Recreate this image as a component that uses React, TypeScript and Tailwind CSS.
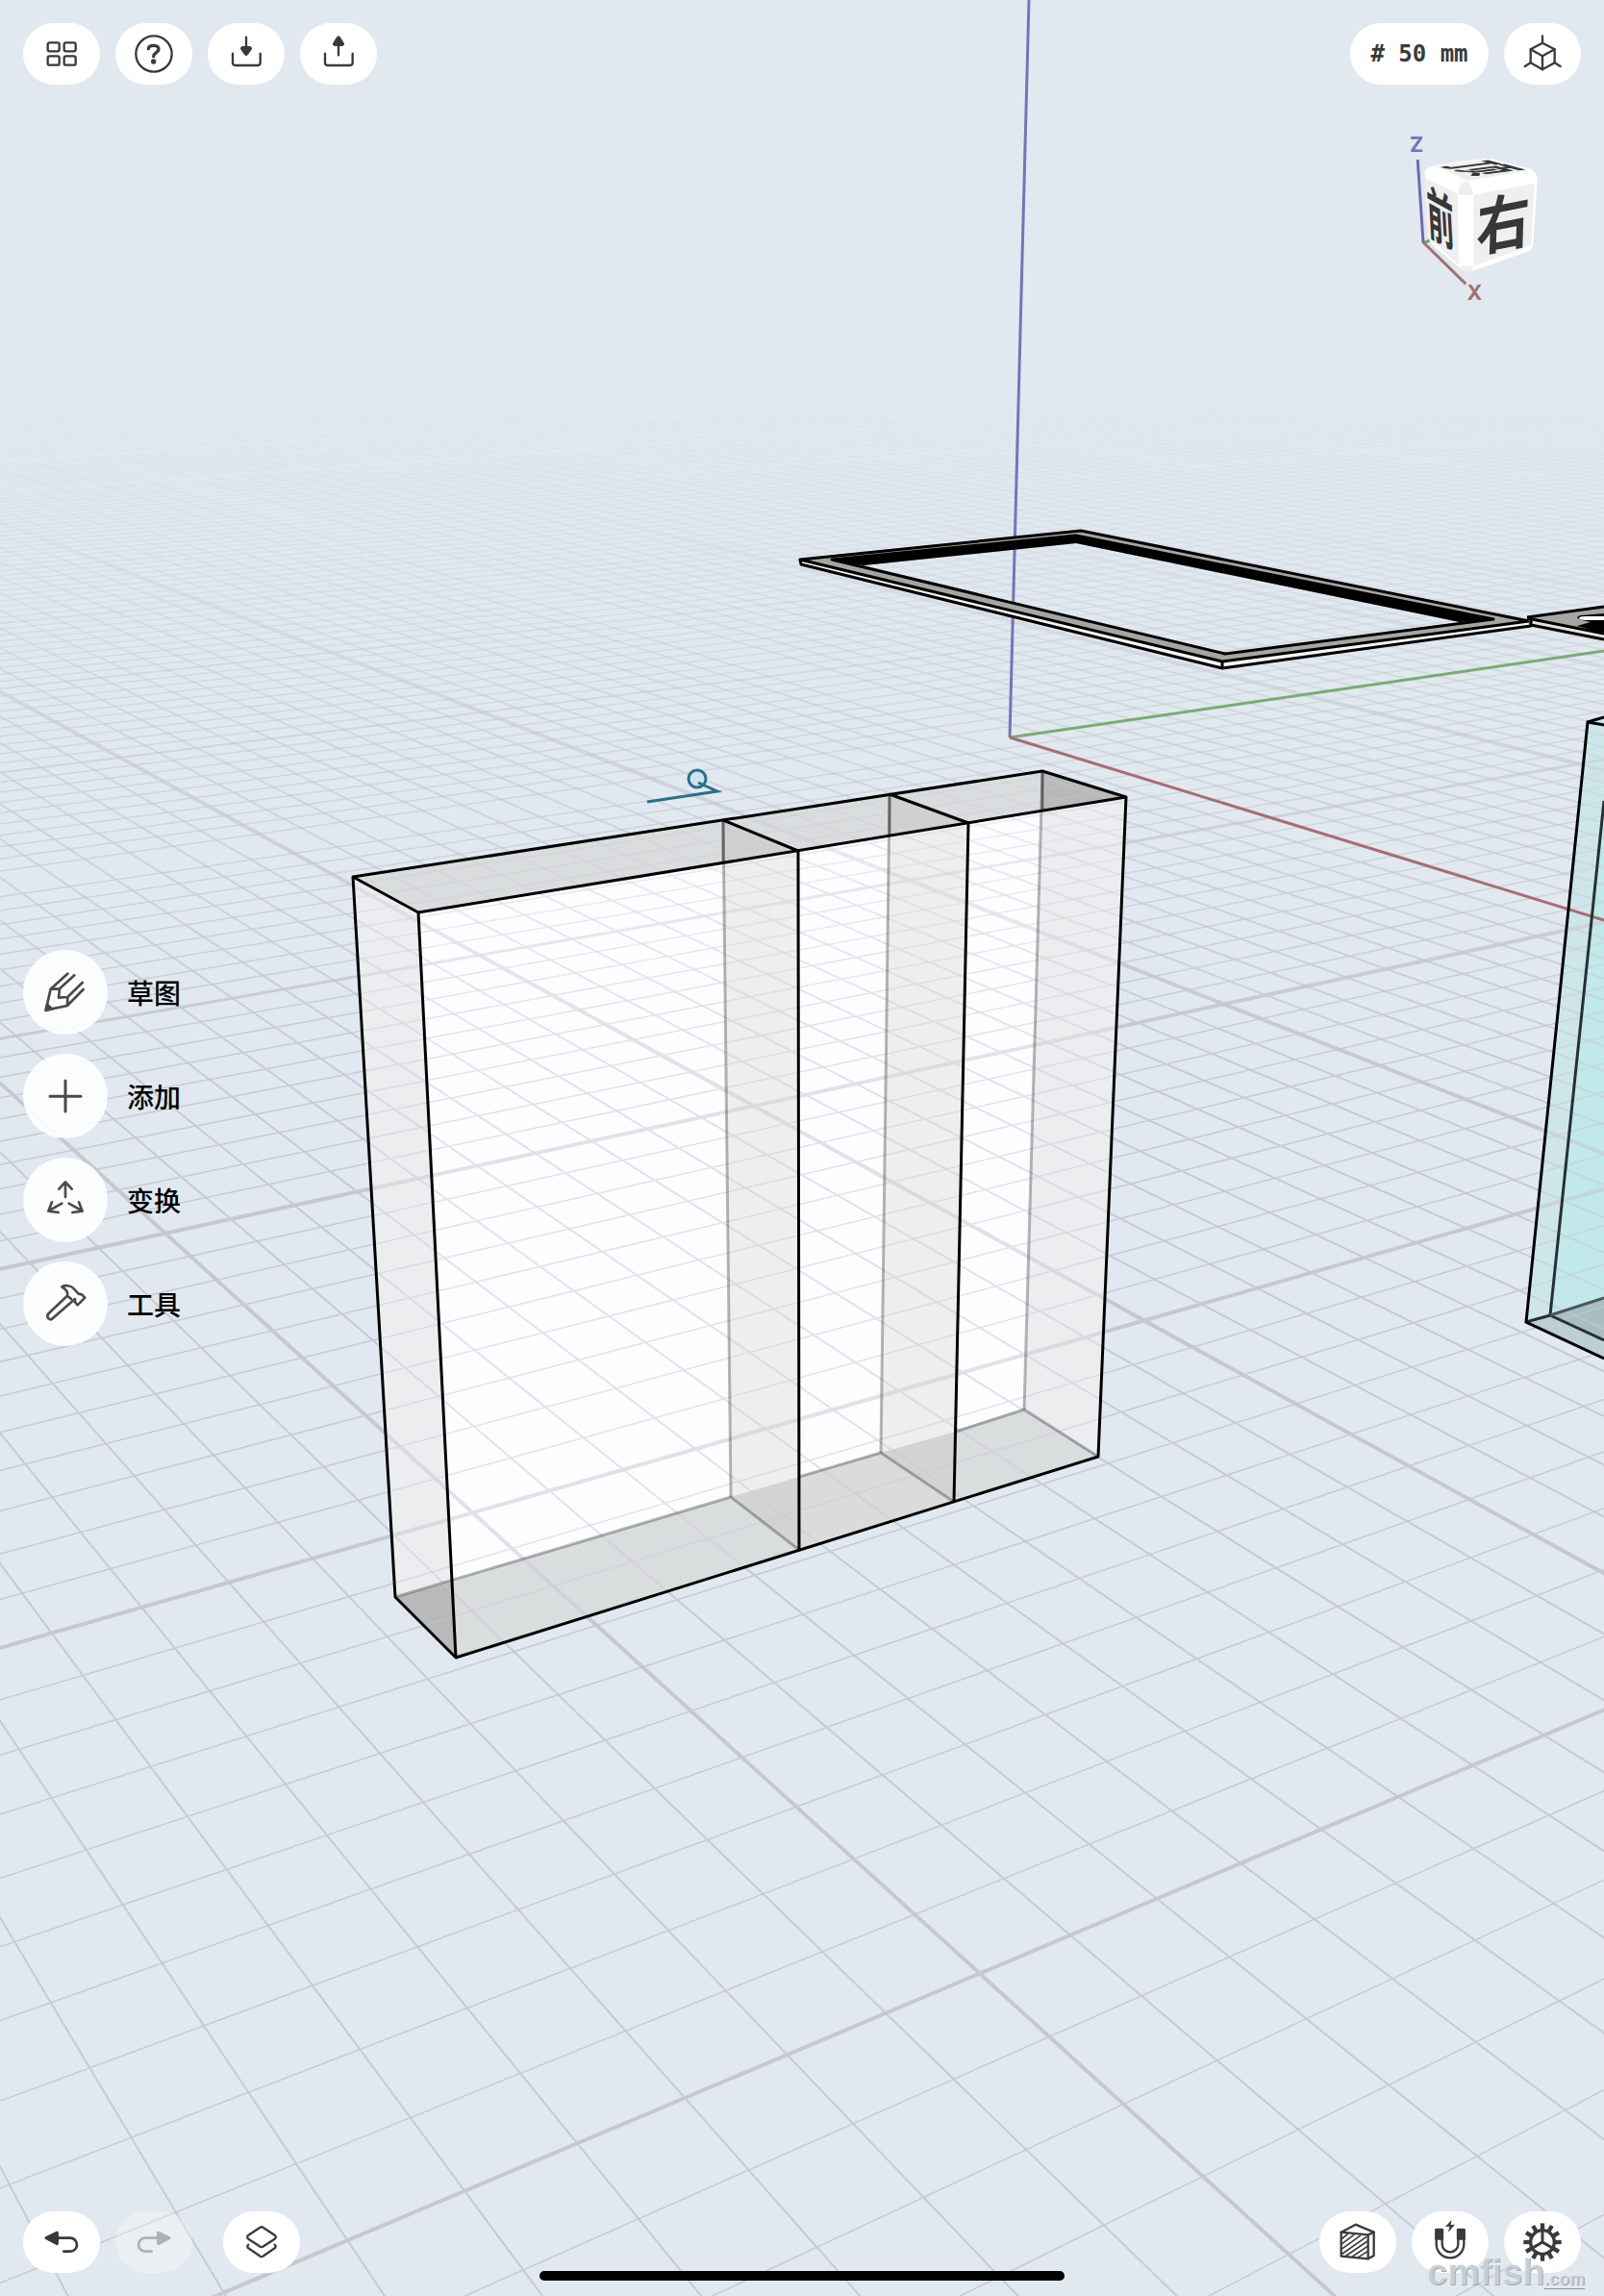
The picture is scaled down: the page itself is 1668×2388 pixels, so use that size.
import React from "react";

const VP_X = { x: -1132, y: 97 };
const VP_Y = { x: 5650, y: 97 };
const TOP = 390;
const BOTTOM = 2400;

type Seg = { d: string; w: number };

function range(from: number, to: number): number[] {
  return Array.from({ length: to - from + 1 }, (_, i) => from + i);
}

// Ground lines that run towards the X vanishing point.
function xLine(m: number): Seg {
  const k = 3.257 + 0.0719 * m;
  const x = (y: number) => Math.round(VP_X.x + k * (y - VP_X.y));
  return { d: `M${x(TOP)} ${TOP}L${x(BOTTOM)} ${BOTTOM}`, w: 4 };
}

// Ground lines that run towards the Y vanishing point.
function yLine(n: number): Seg {
  const k = 6.872 - 0.1126 * n;
  const x = (y: number) => Math.round(VP_Y.x - k * (y - VP_Y.y));
  return { d: `M${x(TOP)} ${TOP}L${x(BOTTOM)} ${BOTTOM}`, w: n >= 20 ? 4 : n >= 10 ? 3 : 2 };
}

const xs = range(-38, 85);
const ys = range(-100, 46);
const minorX = xs
  .filter((m) => m % 10 !== 0)
  .map((m) => xLine(m).d)
  .join("");
const minorY = ys
  .filter((n) => n % 10 !== 0)
  .map((n) => yLine(n).d)
  .join("");
const major = [
  ...xs.filter((m) => m % 10 === 0 && m !== 0).map(xLine),
  ...ys.filter((n) => n % 10 === 0 && n !== 0).map(yLine),
];

const BODY = "M367 912L1084 802L1171 829L1142 1515L474 1724L411 1661Z";
const CYAN = "M1651 751L1668 746V1413L1587 1375Z";

function Ground() {
  return (
    <g fill="none">
      <path d={minorX} stroke="url(#minorFade)" strokeWidth="2" />
      <path d={minorY} stroke="url(#minorFade)" strokeWidth="1.5" />
      {major.map((s) => (
        <path key={s.d} d={s.d} stroke="url(#majorFade)" strokeWidth={s.w} />
      ))}
    </g>
  );
}

function Scene() {
  return (
    <svg
      className="absolute inset-0 h-full w-full"
      viewBox="0 0 1668 2388"
      preserveAspectRatio="xMidYMid slice"
      aria-hidden="true"
    >
      <defs>
        <linearGradient id="minorFade" gradientUnits="userSpaceOnUse" x1="0" y1="400" x2="0" y2="1150">
          <stop offset="0" stopColor="#c8cad3" stopOpacity="0" />
          <stop offset="0.2" stopColor="#c8cad3" stopOpacity="0.2" />
          <stop offset="0.45" stopColor="#c8cad3" stopOpacity="0.55" />
          <stop offset="1" stopColor="#c8cad3" stopOpacity="1" />
        </linearGradient>
        <linearGradient id="majorFade" gradientUnits="userSpaceOnUse" x1="0" y1="480" x2="0" y2="1150">
          <stop offset="0" stopColor="#c6c8d0" stopOpacity="0" />
          <stop offset="0.4" stopColor="#c6c8d0" stopOpacity="0.6" />
          <stop offset="1" stopColor="#c6c8d0" stopOpacity="1" />
        </linearGradient>
        <clipPath id="bodyClip">
          <path d={BODY} />
        </clipPath>
        <clipPath id="cyanClip">
          <path d={CYAN} />
        </clipPath>
      </defs>

      <Ground />

      {/* world axes */}
      <g fill="none" strokeWidth="3">
        <path d="M1050 767L1070 0" stroke="#7474b8" />
        <path d="M1050 767L1668 677" stroke="#7aab77" />
      </g>

      {/* sketch plane marker */}
      <g fill="none" stroke="#2a7089" strokeWidth="3">
        <circle cx="725" cy="810" r="9" fill="#cfe3ee" />
        <path d="M673 834L746 823L726 814" />
      </g>

      {/* glass body with two dividers */}
      <path d="M435 949L1171 829L1142 1515L474 1724Z" fill="#fcfdfe" />
      <path d="M367 912L435 949L474 1724L411 1661Z" fill="#ecedef" />
      <path d="M367 912L1084 802L1171 829L435 949Z" fill="#dadddd" />
      <path d="M411 1661L1065 1466L1142 1515L474 1724Z" fill="#dadddd" />
      <path d="M831 1536L993 1489L992 1562L831 1612Z" fill="#dbdbdc" />
      <path d="M752 897L830 885L831 1536L760 1557Z" fill="#edefee" />
      <path d="M924 869L1007 856L994 1489L916 1511Z" fill="#edefee" />
      <path d="M1083 843L1171 829L1142 1515L1065 1466Z" fill="#ecedef" />
      <path d="M760 1557L831 1536V1612Z" fill="#d2d3d2" />
      <path d="M916 1511L994 1489L992 1562Z" fill="#d2d3d2" />
      <path d="M752 853L830 885L752 897Z" fill="#cfd0cf" />
      <path d="M925 826L1007 856L924 869Z" fill="#cfd0cf" />
      <path d="M1084 802L1171 829L1083 843Z" fill="#b9b9b9" />
      <path d="M411 1661L470 1645L474 1724Z" fill="#b9b9b9" />
      <g clipPath="url(#bodyClip)" opacity="0.5">
        <Ground />
      </g>
      <g fill="none" stroke="#000000" strokeOpacity="0.28" strokeWidth="3">
        <path d="M411 1661L760 1557L831 1612" />
        <path d="M831 1536L916 1511L992 1562" />
        <path d="M994 1489L1065 1466L1142 1515" />
        <path d="M752 853L760 1557" />
        <path d="M925 826L916 1511" />
        <path d="M1084 802L1065 1466" />
      </g>
      <g fill="none" stroke="#000000" strokeOpacity="0.35" strokeWidth="3">
        <path d="M752 853V897" />
        <path d="M925 826V869" />
        <path d="M1084 802V843" />
      </g>
      <g fill="none" stroke="#000000" strokeWidth="3" strokeLinejoin="round">
        <path d={BODY} />
        <path d="M367 912L435 949L1171 829" />
        <path d="M435 949L474 1724" />
        <path d="M752 853L830 885L831 1612" />
        <path d="M925 826L1007 856L992 1562" />
      </g>

      {/* floating frame */}
      <path d="M833 586L1271 695L1592 651L1590 643L1271 688L832 580Z" fill="#f4f4f2" />
      <path
        fillRule="evenodd"
        d="M832 581L1124 551L1590 645L1271 688ZM898 588L1274 680L1518 647L1119 565Z"
        fill="#a5a6a4"
      />
      <path d="M865 582L1119 556L1553 644L1518 647L1119 565L898 588Z" fill="#000000" />
      <g fill="none" stroke="#000000" strokeWidth="3" strokeLinejoin="round">
        <path d="M832 582L1124 552L1590 646L1271 688Z" />
        <path d="M832 582L833 587L1271 695L1592 651V646" />
        <path d="M1271 688V695" />
        <path d="M865 582L1274 680L1553 644L1119 557Z" />
      </g>

      {/* neighbouring plate */}
      <path d="M1588 642L1668 631V665L1592 650Z" fill="#a5a6a4" />
      <path d="M1590 644L1668 659V665L1592 650Z" fill="#e4e4e2" />
      <path d="M1640 651L1654 647L1645 645Q1636 642 1644 640L1668 638V659Z" fill="#000000" />
      <path d="M1642 643Q1642 641 1648 641L1668 641V645L1652 645Q1642 645 1642 643Z" fill="#ffffff" />
      <g fill="none" stroke="#000000" strokeWidth="3">
        <path d="M1588 642L1668 631" />
        <path d="M1588 643L1668 659" />
        <path d="M1592 650L1668 665" />
        <path d="M1592 642V651" />
      </g>

      {/* tinted tank */}
      <path d={CYAN} fill="#cde6ea" />
      <path d="M1668 833V1350L1612 1368Z" fill="#c1e8ea" />
      <path d="M1587 1375L1612 1368L1668 1394V1413Z" fill="#bccfd5" />
      <path d="M1612 1368L1668 1350V1394Z" fill="#a8bfc3" />
      <g clipPath="url(#cyanClip)" opacity="0.6">
        <Ground />
      </g>
      <path d="M1050 767L1668 957" stroke="#a56f72" strokeWidth="3" />
      <g fill="none" stroke="#263032" strokeWidth="3">
        <path d="M1587 1375L1612 1368L1668 833" />
        <path d="M1612 1368L1668 1394" />
        <path d="M1612 1368L1668 1350" stroke="#4a5858" />
      </g>
      <g fill="none" stroke="#000000" strokeWidth="3">
        <path d="M1668 746L1651 751L1587 1375L1668 1413" />
        <path d="M1651 751L1668 754" />
      </g>
    </svg>
  );
}

function ViewCube() {
  const face = { fontFamily: '"Noto Sans CJK SC", sans-serif', textAnchor: "middle" as const };
  return (
    <svg className="h-46 w-46" viewBox="240 408 552 552" role="img" aria-label="视图方向">
      <path d="M302 757L322 750" stroke="#6aa56c" strokeWidth="9" />
      <path
        d="M305 540Q308 520 335 516L490 495Q505 494 520 497L630 526Q657 535 656 565L643 765Q641 780 625 785L460 844Q440 852 420 841L330 765Q318 755 316 735Z"
        fill="#ffffff"
      />
      <path d="M306 556L407 604L412 828L328 752Q320 745 318 735Z" fill="#efefef" />
      <path d="M457 608L647 572L637 766L457 830Z" fill="#efefef" />
      <path d="M340 519L500 497L633 532L438 564Z" fill="#efefef" />
      <path d="M406 606Q412 572 435 564Q455 580 456 606Q430 613 406 606Z" fill="#efefef" />
      <path d="M412 832Q435 828 457 831Q450 846 440 848Q425 846 412 832Z" fill="#efefef" />
      <g fill="#383838" fontWeight="500">
        <text {...face} fontSize="120" transform="matrix(1 0.27 -1.5 0.2 482 525)" y="44" fontWeight="700">
          顶
        </text>
        <text {...face} fontSize="172" transform="matrix(0.49 0.27 0.06 1.08 354 681)" y="64" fontWeight="700">
          前
        </text>
        <text {...face} fontSize="194" transform="matrix(0.86 -0.17 -0.03 1 550 696)" y="73" fontWeight="700">
          右
        </text>
      </g>
      <path d="M283 502L300 756" stroke="#6c6cb0" strokeWidth="9" strokeLinecap="round" />
      <path d="M303 759L430 883" stroke="#a56f72" strokeWidth="9" strokeLinecap="round" />
      <g fontFamily="Inter, sans-serif" fontWeight="700" fontSize="64" textAnchor="middle">
        <text x="279" y="474" fill="#7474b8">
          Z
        </text>
        <text x="460" y="937" fill="#a56f72">
          X
        </text>
      </g>
    </svg>
  );
}

function Pill({
  label,
  disabled,
  children,
}: {
  label: string;
  disabled?: boolean;
  children: React.ReactNode;
}) {
  return (
    <button
      type="button"
      aria-label={label}
      disabled={disabled}
      className="h-16 w-20 rounded-full bg-white text-[#3a3a3a] disabled:bg-white/30 disabled:text-[#adb1b4]"
    >
      <svg
        className="h-16 w-20"
        viewBox="0 0 240 192"
        fill="none"
        stroke="currentColor"
        strokeWidth="7"
        strokeLinecap="round"
        strokeLinejoin="round"
        aria-hidden="true"
      >
        {children}
      </svg>
    </button>
  );
}

const tray = "M78 95V124Q78 132 86 132H156Q164 132 164 124V95";

function GridIcon() {
  return (
    <>
      <rect x="77" y="61" width="36" height="27" rx="6" />
      <rect x="128" y="61" width="36" height="27" rx="6" />
      <rect x="77" y="103" width="36" height="28" rx="6" />
      <rect x="128" y="103" width="36" height="28" rx="6" />
    </>
  );
}

function HelpIcon() {
  return (
    <>
      <circle cx="120" cy="96" r="56" />
      <path d="M103 80C105 66 136 67 135 82C134 93 119 93 119 104" strokeWidth="10" />
      <circle cx="119" cy="120" r="8" fill="currentColor" stroke="none" />
    </>
  );
}

function SectionIcon() {
  return (
    <>
      <path d="M68 65L113 41L170 65V138L152 148L68 140Z" />
      <path d="M68 65L152 73V148M152 73L170 65" />
      <g strokeWidth="5">
        <path d="M72 84L88 71M72 100L107 74M72 116L127 76M72 132L146 80M84 138L150 93M103 141L150 109M122 143L150 125" />
      </g>
    </>
  );
}

function GearIcon() {
  return (
    <>
      <circle cx="120" cy="96" r="37" strokeWidth="10" />
      <g strokeWidth="13" strokeLinecap="butt">
        {range(0, 11).map((i) => (
          <path key={i} d="M120 57V37" transform={`rotate(${i * 30} 120 96)`} />
        ))}
      </g>
      <path d="M120 96V62M120 96L91 113M120 96L149 113" strokeWidth="9" />
    </>
  );
}

const tools: { label: string; icon: React.ReactNode }[] = [
  {
    label: "草图",
    icon: (
      <>
        <path d="M139 74L86 122L71 188L138 174L188 123M160 79L114 121L111 149L139 147L185 102M86 122L114 121M139 147L138 174" />
        <path d="M71 189L75 170L90 184Z" fill="currentColor" />
      </>
    ),
  },
  { label: "添加", icon: <path d="M132 84V180M84 133H180" strokeWidth="9" /> },
  {
    label: "变换",
    icon: (
      <path d="M132 123V77M112 98L132 76L152 98M121 143L80 166M90 139L79 167L110 171M143 143L184 166M174 139L185 167L154 171" />
    ),
  },
  {
    label: "工具",
    icon: (
      <path d="M121 79C130 74 148 74 156 83L173 101L183 103L193 113L170 136L162 127L162 117L92 178Q84 184 78 177Q73 169 80 162L138 107Q143 93 121 79ZM138 107L150 117" />
    ),
  },
];

export default function App() {
  return (
    <div className="relative grid h-screen grid-rows-[1fr_auto_1fr] overflow-hidden bg-[#e1e8f0]">
      <Scene />

      <header className="relative flex items-start justify-between p-6">
        <nav className="flex gap-4">
          <Pill label="设计">
            <GridIcon />
          </Pill>
          <Pill label="帮助">
            <HelpIcon />
          </Pill>
          <Pill label="导入">
            <path d={tray} />
            <path d="M120 44V80" />
            <path
              d="M108 72H132Q142 76 136 84L127 97Q120 108 113 97L104 84Q98 76 108 72Z"
              fill="currentColor"
              stroke="none"
            />
          </Pill>
          <Pill label="导出">
            <path d={tray} />
            <path d="M120 66V100" />
            <path
              d="M108 72H132Q142 68 136 60L127 46Q120 34 113 46L104 60Q98 68 108 72Z"
              fill="currentColor"
              stroke="none"
            />
          </Pill>
        </nav>
        <div className="flex flex-col items-end gap-12">
          <div className="flex gap-4">
            <button
              type="button"
              className="h-16 w-36 rounded-full bg-white font-['DejaVu_Sans_Mono',monospace] text-2xl font-bold whitespace-nowrap text-[#3a3a3a]"
            >
              # 50 mm
            </button>
            <Pill label="视图">
              <path d="M120 40V62L158 82V124L120 145L83 124V82L120 62" />
              <path d="M83 82L120 103L158 82M120 103V145M83 124L65 135M158 124L176 135" />
            </Pill>
          </div>
          <ViewCube />
        </div>
      </header>

      <aside className="relative flex flex-col items-start gap-5 px-6">
        {tools.map((t) => (
          <button
            key={t.label}
            type="button"
            className="flex items-center gap-5 font-['Noto_Sans_CJK_SC',sans-serif] text-[28px] leading-10 font-medium text-black"
          >
            <span className="size-22 rounded-full bg-white/90 text-[#4a4a4a]">
              <svg
                className="size-22"
                viewBox="0 0 264 264"
                fill="none"
                stroke="currentColor"
                strokeWidth="8"
                strokeLinecap="round"
                strokeLinejoin="round"
                aria-hidden="true"
              >
                {t.icon}
              </svg>
            </span>
            {t.label}
          </button>
        ))}
      </aside>

      <footer className="relative flex items-end justify-between p-6">
        <div className="flex gap-8">
          <div className="flex gap-4">
            <Pill label="撤销">
              <path d="M72 83L106 66Q108 83 106 101Z" fill="currentColor" strokeWidth="9" />
              <path d="M111 83H147A21 21 0 0 1 147 125H127" strokeWidth="8" />
            </Pill>
            <Pill label="重做" disabled>
              <path d="M168 83L134 66Q132 83 134 101Z" fill="currentColor" strokeWidth="9" />
              <path d="M129 83H93A21 21 0 0 0 93 125H113" strokeWidth="8" />
            </Pill>
          </div>
          <Pill label="图层">
            <path d="M114 51Q120 46 126 51L161 74Q168 80 161 86L126 109Q120 114 114 109L79 86Q72 80 79 74Z" />
            <path d="M79 104Q73 109 79 115L114 139Q120 144 126 139L161 115Q167 109 161 104" />
          </Pill>
        </div>
        <div className="flex gap-4">
          <Pill label="剖面">
            <SectionIcon />
          </Pill>
          <Pill label="吸附">
            <path d="M77 58V102A43 43 0 0 0 163 102V58H145V102A25 25 0 0 1 95 102V58Z" />
            <path d="M76 57H96V86H76ZM144 57H164V86H144Z" fill="currentColor" />
            <path d="M125 26L105 48L118 47L114 65L135 41L122 42Z" fill="currentColor" stroke="none" />
          </Pill>
          <Pill label="设置">
            <GearIcon />
          </Pill>
        </div>
        <span className="absolute right-5 bottom-1 font-['Liberation_Sans',sans-serif] text-[38px] leading-9 font-bold text-[#e1e8f0]/60 [text-shadow:1px_1px_0_#a3a8ae]">
          cmfish<span className="border-b border-[#8d9298] text-lg font-bold">.com</span>
        </span>
        <div className="absolute bottom-4 left-1/2 h-[10px] w-[546px] -translate-x-1/2 rounded-full bg-black" />
      </footer>
    </div>
  );
}
